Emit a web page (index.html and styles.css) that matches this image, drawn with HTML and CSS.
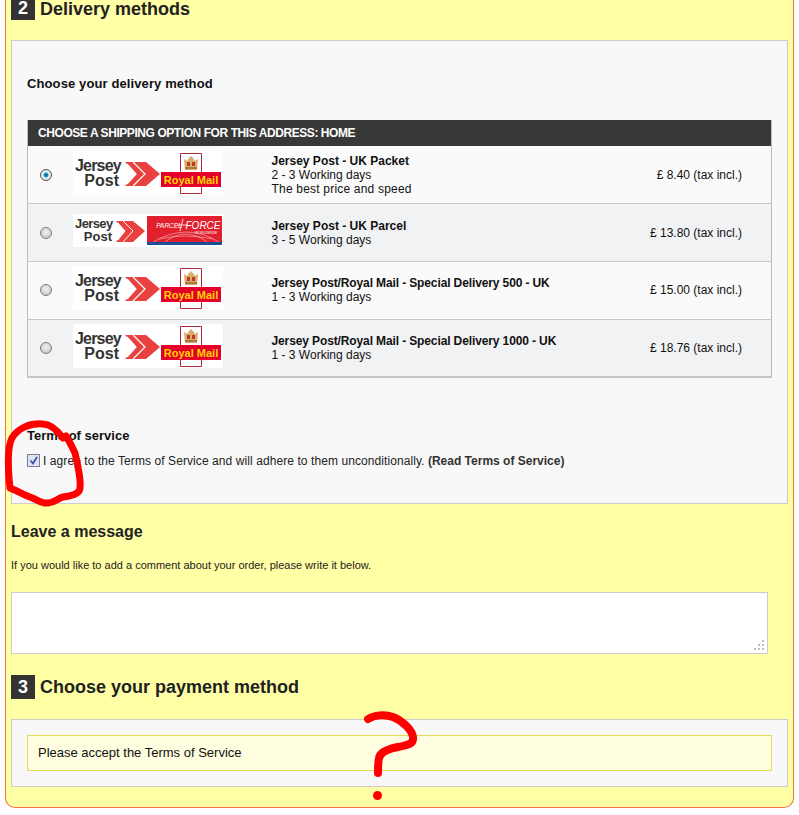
FILE: index.html
```html
<!DOCTYPE html>
<html lang="en">
<head>
    <meta charset="UTF-8">
    <title>Checkout</title>
    <link rel="stylesheet" href="styles.css">
</head>
<body>
    <div class="checkout">
        <h2 class="step-title first"><span class="step-num">2</span><span class="step-text">Delivery methods</span></h2>

        <div class="box delivery-box">
            <h3 class="box-title">Choose your delivery method</h3>

            <table class="ship-table">
                <colgroup>
                    <col class="col-a">
                    <col class="col-b">
                    <col class="col-c">
                    <col>
                </colgroup>
                <thead>
                    <tr><th colspan="4">Choose a shipping option for this address: Home</th></tr>
                </thead>
                <tbody>
                    <tr class="row-a">
                        <td><input type="radio" name="ship" class="radio" checked></td>
                        <td>
                            <svg class="logo" width="150" height="44" viewBox="0 0 150 44">
                                <rect width="150" height="44" fill="#fff"/>
                                <text x="2" y="19.500" class="jp-text jp-top" font-size="16">Jersey</text>
                                <text x="46" y="34.500" class="jp-text" font-size="16" text-anchor="end">Post</text>
                                <path d="M52 11H73L87 23 73 35H52L63 23z" fill="#e8413f"/>
                                <path d="M60 11L72 23 60 35M54 33L63 23 54 13" fill="none" stroke="#fff" stroke-width="1.200"/>
                                <path d="M107.500 2.500h21v40h-21z" fill="#fff" stroke="#b5283c"/>
                                <path d="M111 8l3 2 2-3 2-2 2 2 2 3 3-2-1 11h-12z" fill="#d9ae6c"/>
                                <path d="M114 11h3v4h-3zM119 11h3v4h-3z" fill="#c0392b"/>
                                <rect x="112" y="16" width="12" height="2" fill="#a97a35"/>
                                <rect x="88" y="21" width="60" height="15" fill="#e4002b"/>
                                <text x="118" y="33" class="rm-text" font-size="11" text-anchor="middle">Royal Mail</text>
                            </svg>
                        </td>
                        <td><b>Jersey Post - UK Packet</b><br>2 - 3 Working days<br><span class="note">The best price and speed</span></td>
                        <td class="price">£ 8.40 (tax incl.)</td>
                    </tr>
                    <tr class="row-b">
                        <td><input type="radio" name="ship" class="radio"></td>
                        <td>
                            <svg class="logo" width="150" height="33" viewBox="0 0 150 33">
                                <rect width="150" height="33" fill="#fff"/>
                                <text x="2" y="14" class="jp-text jp-top-small" font-size="13">Jersey</text>
                                <text x="39" y="27" class="jp-text" font-size="13" text-anchor="end">Post</text>
                                <path d="M43 7H60L72 17 60 28H43L52 17z" fill="#e8413f"/>
                                <path d="M50 7L60 17 50 28M45 26L52 17 45 9" fill="none" stroke="#fff" stroke-width="1"/>
                                <rect x="74" y="2" width="75" height="29" fill="#e21f2d"/>
                                <rect x="74" y="28" width="75" height="3" fill="#1c4f96"/>
                                <path d="M80 28q34-20 66 0M92 28q10-8 20-8M112 20q12 0 22 8M86 25q26-6 54 0" fill="none" stroke="#f3a9a9" stroke-width=".7"/>
                                <text x="96" y="14" class="pf-text" font-size="6.500" text-anchor="middle">PARCEL</text>
                                <text x="130" y="15" class="pf-text" font-size="10" text-anchor="middle">FORCE</text>
                                <path d="M110 5l-3 12M104 11h10" stroke="#fff" stroke-width=".8"/>
                                <text x="144" y="20" class="pf-text" font-size="3.500" text-anchor="end">WORLDWIDE</text>
                            </svg>
                        </td>
                        <td><b>Jersey Post - UK Parcel</b><br>3 - 5 Working days</td>
                        <td class="price">£ 13.80 (tax incl.)</td>
                    </tr>
                    <tr class="row-a">
                        <td><input type="radio" name="ship" class="radio"></td>
                        <td>
                            <svg class="logo" width="150" height="44" viewBox="0 0 150 44">
                                <rect width="150" height="44" fill="#fff"/>
                                <text x="2" y="19.500" class="jp-text jp-top" font-size="16">Jersey</text>
                                <text x="46" y="34.500" class="jp-text" font-size="16" text-anchor="end">Post</text>
                                <path d="M52 11H73L87 23 73 35H52L63 23z" fill="#e8413f"/>
                                <path d="M60 11L72 23 60 35M54 33L63 23 54 13" fill="none" stroke="#fff" stroke-width="1.200"/>
                                <path d="M107.500 2.500h21v40h-21z" fill="#fff" stroke="#b5283c"/>
                                <path d="M111 8l3 2 2-3 2-2 2 2 2 3 3-2-1 11h-12z" fill="#d9ae6c"/>
                                <path d="M114 11h3v4h-3zM119 11h3v4h-3z" fill="#c0392b"/>
                                <rect x="112" y="16" width="12" height="2" fill="#a97a35"/>
                                <rect x="88" y="21" width="60" height="15" fill="#e4002b"/>
                                <text x="118" y="33" class="rm-text" font-size="11" text-anchor="middle">Royal Mail</text>
                            </svg>
                        </td>
                        <td><b class="name-long">Jersey Post/Royal Mail - Special Delivery 500 - UK</b><br>1 - 3 Working days</td>
                        <td class="price">£ 15.00 (tax incl.)</td>
                    </tr>
                    <tr class="row-b">
                        <td><input type="radio" name="ship" class="radio"></td>
                        <td>
                            <svg class="logo" width="150" height="44" viewBox="0 0 150 44">
                                <rect width="150" height="44" fill="#fff"/>
                                <text x="2" y="19.500" class="jp-text jp-top" font-size="16">Jersey</text>
                                <text x="46" y="34.500" class="jp-text" font-size="16" text-anchor="end">Post</text>
                                <path d="M52 11H73L87 23 73 35H52L63 23z" fill="#e8413f"/>
                                <path d="M60 11L72 23 60 35M54 33L63 23 54 13" fill="none" stroke="#fff" stroke-width="1.200"/>
                                <path d="M107.500 2.500h21v40h-21z" fill="#fff" stroke="#b5283c"/>
                                <path d="M111 8l3 2 2-3 2-2 2 2 2 3 3-2-1 11h-12z" fill="#d9ae6c"/>
                                <path d="M114 11h3v4h-3zM119 11h3v4h-3z" fill="#c0392b"/>
                                <rect x="112" y="16" width="12" height="2" fill="#a97a35"/>
                                <rect x="88" y="21" width="60" height="15" fill="#e4002b"/>
                                <text x="118" y="33" class="rm-text" font-size="11" text-anchor="middle">Royal Mail</text>
                            </svg>
                        </td>
                        <td><b class="name-long">Jersey Post/Royal Mail - Special Delivery 1000 - UK</b><br>1 - 3 Working days</td>
                        <td class="price">£ 18.76 (tax incl.)</td>
                    </tr>
                </tbody>
            </table>

            <h3 class="terms-title">Terms of service</h3>
            <p class="terms-line">
                <span class="check">
                    <svg width="9" height="9" viewBox="0 0 9 9"><path d="M1.500 4.500l2.500 3L8 1" fill="none" stroke="#3f51b5" stroke-width="1.800"/></svg>
                </span>
                <span class="terms-text">I agree to the Terms of Service and will adhere to them unconditionally. <b class="terms-link">(Read Terms of Service)</b></span>
            </p>
        </div>

        <h3 class="msg-title">Leave a message</h3>
        <p class="msg-hint">If you would like to add a comment about your order, please write it below.</p>
        <div class="msg-wrap">
            <textarea class="msg-input"></textarea>
            <svg class="grip" width="10" height="10" viewBox="0 0 10 10">
                <path d="M8 0h2v2H8zM4 4h2v2H4zM8 4h2v2H8zM0 8h2v2H0zM4 8h2v2H4zM8 8h2v2H8z" fill="#bdbdbd"/>
            </svg>
        </div>

        <h2 class="step-title"><span class="step-num">3</span><span class="step-text">Choose your payment method</span></h2>

        <div class="box payment-box">
            <p class="warning">Please accept the Terms of Service</p>
        </div>
    </div>

    <!-- Red marks drawn over the screenshot -->
    <svg class="marks" width="799" height="815" viewBox="0 0 799 815">
        <path d="M63 438C57 430 50 424 43 424C30 423 18 428 12 438C7 448 8 470 10 488C18 491 24 495 30 497C38 500 42 504 48 503C56 502 58 498 63 497C72 496 80 494 80 488C81 480 79 470 75 453C72 447 70 442 66 436" class="mark-line" stroke-width="7"/>
        <path d="M368 719C374 715 385 714 393 717C403 721 412 730 413 737C414 744 408 745 398 747C388 749 380 752 379 758C378 763 378 768 378 773" class="mark-line" stroke-width="8"/>
        <circle cx="377.500" cy="795.500" r="4.500" fill="#f00"/>
    </svg>
</body>
</html>
```

FILE: styles.css
```css
/* Global Styles */
* {
    box-sizing: border-box;
    margin: 0;
    padding: 0;
}

html, body {
    height: 815px;
    overflow: hidden;
}

body {
    position: relative;
    background-color: #fff;
    color: #111;
    font-family: "Liberation Sans", Arial, sans-serif;
    font-size: 12px;
}

/* Page panel */
.checkout {
    width: 789px;
    height: 812px;
    margin: -4px 0 0 5px;
    padding: 0 5px;
    background-color: #ffffa6;
    border: 1px solid #f4743b;
    border-top: none;
    border-radius: 0 0 10px 10px;
}

.step-title {
    display: flex;
    align-items: center;
    gap: 5px;
    height: 24px;
    color: #222;
    font-size: 18px;
    line-height: 24px;
}

.step-title.first .step-text {
    margin-top: 2px;
}

.step-num {
    width: 24px;
    height: 24px;
    background-color: #333;
    color: #fff;
    text-align: center;
}

.box {
    background-color: #f8f8f8;
    border: 1px solid #ccc;
}

.delivery-box {
    height: 464px;
    margin-top: 20px;
    padding: 35px 15px 0;
}

.box-title {
    font-size: 13px;
    letter-spacing: .11px;
    line-height: 16px;
}

/* Shipping table */
.ship-table {
    width: 745px;
    margin-top: 28px;
    border-collapse: collapse;
    table-layout: fixed;
    border-left: 1px solid #bbb;
    border-right: 1px solid #bbb;
    border-bottom: 2px solid #c4c4c4;
}

.col-a {
    width: 45px;
}

.col-b {
    width: 199px;
}

.col-c {
    width: 370px;
}

.ship-table th {
    height: 26px;
    padding-left: 10px;
    background-color: #383838;
    color: #fff;
    font-size: 12px;
    letter-spacing: -.43px;
    text-align: left;
    text-transform: uppercase;
}

.ship-table td {
    height: 57.750px;
    line-height: 14px;
    border-bottom: 1px solid #c4c8cc;
    vertical-align: middle;
}

.row-a {
    background-color: #fafafa;
}

.row-b {
    background-color: #f1f2f4;
}

.name-long {
    letter-spacing: -.12px;
}

.note {
    letter-spacing: .2px;
}

.price {
    padding-right: 29px;
    text-align: right;
    white-space: nowrap;
}

.logo {
    display: block;
    margin-bottom: 4px;
}

.radio {
    display: block;
    appearance: none;
    width: 12px;
    height: 12px;
    margin-left: 12px;
    background: radial-gradient(circle at 50% 40%, #f4f4f4, #c8c8c8 80%);
    border: 1px solid #7d7d7d;
    border-radius: 50%;
}

.radio:checked {
    background: radial-gradient(circle, #0b5f8c 0, #1d8fc4 28%, #e8f2f6 42%, #cfd4d8 100%);
    border-color: #555;
}

.jp-text {
    fill: #333;
    font-family: "Liberation Sans", Arial, sans-serif;
    font-weight: bold;
}

.jp-top {
    letter-spacing: -.8px;
}

.jp-top-small {
    letter-spacing: -.6px;
}

.rm-text {
    fill: #ffd400;
    font-family: "Liberation Sans", Arial, sans-serif;
    font-weight: bold;
}

.pf-text {
    fill: #fff;
    font-family: "Liberation Sans", Arial, sans-serif;
    font-style: italic;
}

/* Terms */
.terms-title {
    margin-top: 50px;
    font-size: 13px;
    line-height: 16px;
}

.terms-line {
    display: flex;
    align-items: center;
    gap: 3px;
    margin-top: 9px;
    color: #222;
    line-height: 14px;
}

.terms-text {
    padding-top: 1px;
    letter-spacing: .08px;
}

.check {
    display: flex;
    align-items: center;
    justify-content: center;
    width: 13px;
    height: 13px;
    background-color: #dfe3ee;
    border: 1px solid #7a7f99;
}

.terms-link {
    color: #333;
    letter-spacing: 0;
}

/* Message */
.msg-title {
    margin-top: 18px;
    color: #222;
    font-size: 16px;
    line-height: 20px;
}

.msg-hint {
    margin-top: 16px;
    color: #222;
    font-size: 11px;
    line-height: 14px;
}

.msg-wrap {
    position: relative;
    width: 757px;
    height: 62px;
    margin: 20px 0 21px;
}

.msg-input {
    display: block;
    width: 100%;
    height: 100%;
    background-color: #fff;
    border: 1px solid #ccc;
    resize: none;
}

.grip {
    position: absolute;
    right: 4px;
    bottom: 4px;
}

/* Payment */
.payment-box {
    height: 68px;
    margin-top: 20px;
    padding: 15px;
}

.warning {
    height: 36px;
    padding-left: 10px;
    background-color: #fffee0;
    border: 1px solid #e5d957;
    font-size: 13px;
    line-height: 33px;
}

/* Hand drawn marks */
.marks {
    position: absolute;
    top: 0;
    left: 0;
    pointer-events: none;
}

.mark-line {
    fill: none;
    stroke: #f00;
    stroke-linecap: round;
    stroke-linejoin: round;
}
```
